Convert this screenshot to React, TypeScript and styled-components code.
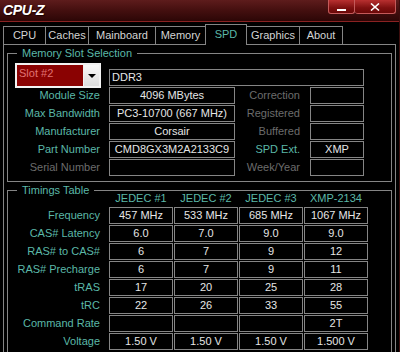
import styled, { createGlobalStyle } from "styled-components";

const GlobalStyle = createGlobalStyle`
  html, body {
    margin: 0;
    padding: 0;
    background: #000;
  }
  body {
    font-family: "Liberation Sans", Arial, sans-serif;
    font-size: 11px;
  }
`;

const TEAL = "#5bb8a8";
const DIM = "#6c6c6c";
const LINE = "#858585";

const tabs = [
  { name: "CPU", w: 43 },
  { name: "Caches", w: 43 },
  { name: "Mainboard", w: 67 },
  { name: "Memory", w: 49 },
  { name: "SPD", w: 42, active: true },
  { name: "Graphics", w: 53 },
  { name: "About", w: 43 },
];

const slotRows = [
  { label: "Module Size", value: "4096 MBytes", side: "Correction", sideValue: "" },
  { label: "Max Bandwidth", value: "PC3-10700 (667 MHz)", side: "Registered", sideValue: "" },
  { label: "Manufacturer", value: "Corsair", side: "Buffered", sideValue: "" },
  { label: "Part Number", value: "CMD8GX3M2A2133C9", side: "SPD Ext.", sideValue: "XMP", sideLit: true },
  { label: "Serial Number", value: "", dim: true, side: "Week/Year", sideValue: "" },
];

const timingHeads = ["JEDEC #1", "JEDEC #2", "JEDEC #3", "XMP-2134"];

const timings = [
  { label: "Frequency", values: ["457 MHz", "533 MHz", "685 MHz", "1067 MHz"] },
  { label: "CAS# Latency", values: ["6.0", "7.0", "9.0", "9.0"] },
  { label: "RAS# to CAS#", values: ["6", "7", "9", "12"] },
  { label: "RAS# Precharge", values: ["6", "7", "9", "11"] },
  { label: "tRAS", values: ["17", "20", "25", "28"] },
  { label: "tRC", values: ["22", "26", "33", "55"] },
  { label: "Command Rate", values: ["", "", "", "2T"] },
  { label: "Voltage", values: ["1.50 V", "1.50 V", "1.50 V", "1.500 V"] },
];

export default function App() {
  return (
    <>
      <GlobalStyle />
      <Window>
        <TitleBar>
          <Title>CPU-Z</Title>
          <Controls>
            <CtrlButton $w={27}>
              <MinGlyph />
            </CtrlButton>
            <CtrlButton $w={41}>
              <svg width="10" height="8" viewBox="0 0 10 8">
                <path d="M1 0.5 L9 7.5 M9 0.5 L1 7.5" stroke="#fff" strokeWidth="1.6" />
              </svg>
            </CtrlButton>
          </Controls>
        </TitleBar>

        <TabBar>
          {tabs.map((t, i) => (
            <Tab
              key={t.name}
              $w={t.w}
              $active={t.active}
              $first={i === 0}
              $beforeActive={tabs[i + 1]?.active}
            >
              {t.name}
            </Tab>
          ))}
        </TabBar>

        <Panel>
          <Group>
            <Legend>Memory Slot Selection</Legend>
            <SlotGrid>
              <SlotSelect>
                <SlotValue>Slot #2</SlotValue>
                <DropButton>
                  <Arrow />
                </DropButton>
              </SlotSelect>
              <TypeField>DDR3</TypeField>
              {slotRows.map((r) => (
                <Row key={r.label}>
                  <Label $dim={r.dim}>{r.label}</Label>
                  <Field>{r.value}</Field>
                  <SideLabel $dim={!r.sideLit}>{r.side}</SideLabel>
                  <Field>{r.sideValue}</Field>
                </Row>
              ))}
            </SlotGrid>
          </Group>

          <Group>
            <Legend>Timings Table</Legend>
            <TimingGrid>
              <span />
              {timingHeads.map((h) => (
                <Head key={h}>{h}</Head>
              ))}
              {timings.map((r) => (
                <Row key={r.label}>
                  <TimingLabel>{r.label}</TimingLabel>
                  {r.values.map((v, i) => (
                    <Field key={i}>{v}</Field>
                  ))}
                </Row>
              ))}
            </TimingGrid>
          </Group>
        </Panel>
      </Window>
    </>
  );
}

const Window = styled.div`
  width: 400px;
  height: 352px;
  box-sizing: border-box;
  overflow: hidden;
  background: #000;
  border-right: 1px solid #3c0d0d;
  display: flex;
  flex-direction: column;
`;

const TitleBar = styled.div`
  flex: none;
  height: 21px;
  display: flex;
  justify-content: space-between;
  align-items: flex-start;
  background: linear-gradient(#5e1c1c, #461010 45%, #2c0606);
  border-bottom: 1px solid #8a2222;
`;

const Title = styled.div`
  padding-left: 3px;
  color: #fff;
  font-size: 14px;
  font-weight: bold;
  font-style: italic;
  line-height: 20px;
  letter-spacing: -0.3px;
  text-shadow: 1px 1px 1px #1a0000;
`;

const Controls = styled.div`
  display: flex;
  margin-right: 3px;
`;

const CtrlButton = styled.div<{ $w: number }>`
  width: ${(p) => p.$w}px;
  height: 14px;
  box-sizing: border-box;
  border: 1px solid #c45a5a;
  border-top: none;
  border-radius: 0 0 3px 3px;
  background: linear-gradient(#b83030, #7e1010 60%, #6a0808);
  display: flex;
  align-items: center;
  justify-content: center;

  & + & {
    border-left: none;
  }
`;

const MinGlyph = styled.div`
  width: 9px;
  height: 2px;
  margin-top: 6px;
  background: #fff;
`;

const TabBar = styled.div`
  flex: none;
  height: 22px;
  padding-left: 3px;
  display: flex;
  align-items: flex-end;
  position: relative;
  z-index: 1;
`;

const Tab = styled.div<{
  $w: number;
  $active?: boolean;
  $first?: boolean;
  $beforeActive?: boolean;
}>`
  width: ${(p) => p.$w}px;
  height: ${(p) => (p.$active ? 21 : 18)}px;
  margin-bottom: ${(p) => (p.$active ? -1 : 0)}px;
  padding-bottom: ${(p) => (p.$active ? 2 : 0)}px;
  box-sizing: border-box;
  border-top: 1px solid ${LINE};
  border-left: ${(p) => (p.$first || p.$active ? `1px solid ${LINE}` : "none")};
  border-right: ${(p) => (p.$beforeActive ? "none" : `1px solid ${LINE}`)};
  background: #000;
  color: ${(p) => (p.$active ? TEAL : "#d4d4d4")};
  display: flex;
  align-items: center;
  justify-content: center;
  line-height: 13px;
`;

const Panel = styled.div`
  flex: 1;
  margin: 0 3px;
  padding: 0 3px;
  border: 1px solid ${LINE};
  border-bottom: none;
`;

const Group = styled.section`
  position: relative;
  margin-top: 8px;
  padding: 9px 0 5px;
  border: 1px solid ${LINE};

  & + & {
    padding-top: 0;
  }
`;

const Legend = styled.span`
  position: absolute;
  top: -7px;
  left: 9px;
  padding: 0 5px;
  background: #000;
  color: ${TEAL};
  line-height: 13px;
`;

const SlotGrid = styled.div`
  display: grid;
  grid-template-columns: 101px 126px 75px 54px;
  grid-template-rows: 23px repeat(5, 17px);
  row-gap: 1px;
`;

const Row = styled.div`
  display: contents;
`;

const SlotSelect = styled.div`
  align-self: start;
  margin-left: 7px;
  width: 86px;
  height: 25px;
  box-sizing: border-box;
  border: 2px solid #f2f2f2;
  display: flex;
  gap: 1px;
  background: #f2f2f2;
`;

const SlotValue = styled.div`
  flex: 1;
  background: #8a0202;
  color: #e07272;
  padding-left: 2px;
  line-height: 17px;
`;

const DropButton = styled.div`
  width: 15px;
  background: linear-gradient(#fafafa, #dcdcdc);
  display: flex;
  align-items: center;
  justify-content: center;
`;

const Arrow = styled.div`
  width: 0;
  height: 0;
  border-left: 4px solid transparent;
  border-right: 4px solid transparent;
  border-top: 4px solid #000;
`;

const Field = styled.div`
  height: 17px;
  box-sizing: border-box;
  border: 1px solid ${LINE};
  padding: 0 2px;
  color: #e6e6e6;
  line-height: 15px;
  text-align: center;
  white-space: nowrap;
  overflow: hidden;
`;

const TypeField = styled(Field)`
  grid-column: 2 / 5;
  align-self: end;
  text-align: left;
`;

const Label = styled.div<{ $dim?: boolean }>`
  padding-right: 9px;
  color: ${(p) => (p.$dim ? DIM : TEAL)};
  text-align: right;
  line-height: 17px;
  white-space: nowrap;
`;

const SideLabel = styled(Label)`
  padding-right: 10px;
`;

const TimingGrid = styled.div`
  display: grid;
  grid-template-columns: 100px repeat(4, 64px);
  grid-template-rows: 15px repeat(8, 17px);
  gap: 1px;
`;

const Head = styled.div`
  color: ${TEAL};
  text-align: center;
  line-height: 15px;
  white-space: nowrap;
`;

const TimingLabel = styled(Label)`
  padding-right: 8px;
`;
